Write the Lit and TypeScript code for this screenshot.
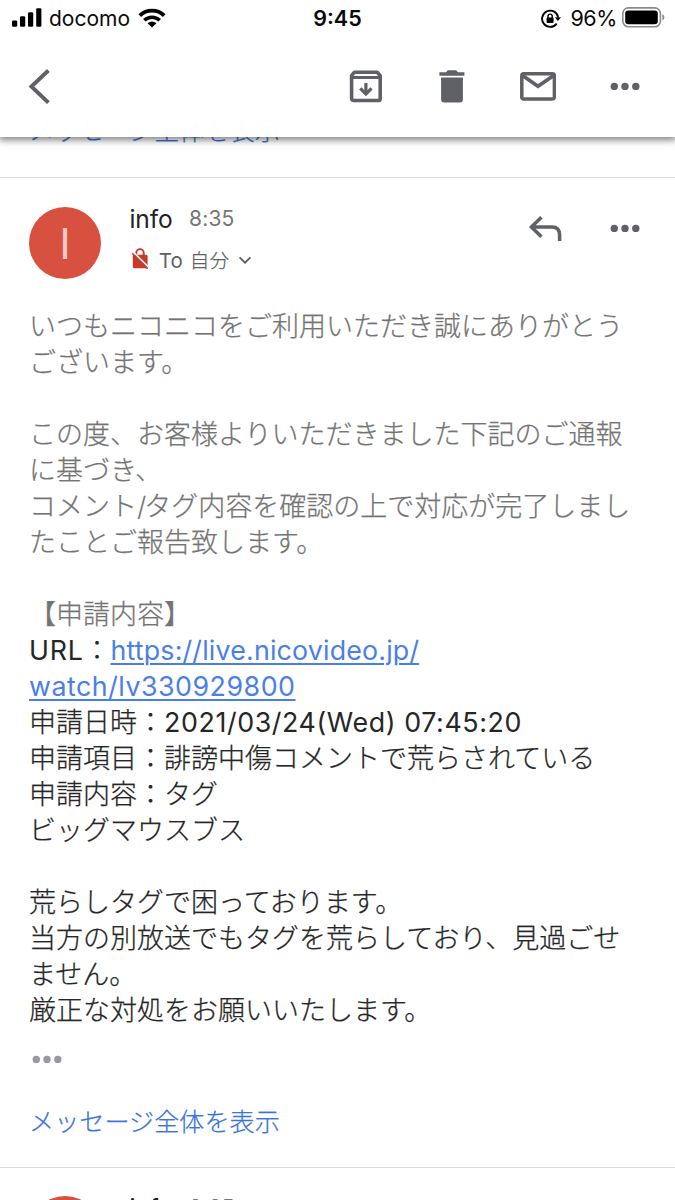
import { LitElement, html, css, nothing } from "lit";
import { customElement, property } from "lit/decorators.js";

const moreDots = html`<svg width="36" height="36" viewBox="0 0 36 36">
  <circle cx="7.3" cy="18.4" r="3.7" fill="currentColor" />
  <circle cx="18" cy="18.4" r="3.7" fill="currentColor" />
  <circle cx="28.8" cy="18.4" r="3.7" fill="currentColor" />
</svg>`;

type Part = { text: string; kind?: "latin" | "url1" | "url2" | "date" | "slash" };
type Line = { tone: "soft" | "dark"; parts: Part[] };

const soft = (text: string): Line => ({ tone: "soft", parts: [{ text }] });
const dark = (text: string): Line => ({ tone: "dark", parts: [{ text }] });

const LINES: Line[] = [
  soft("いつもニコニコをご利用いただき誠にありがとう"),
  soft("ございます。"),
  soft(""),
  soft("この度、お客様よりいただきました下記のご通報"),
  soft("に基づき、"),
  {
    tone: "soft",
    parts: [
      { text: "コメント" },
      { text: "/", kind: "slash" },
      { text: "タグ内容を確認の上で対応が完了しまし" },
    ],
  },
  soft("たことご報告致します。"),
  soft(""),
  soft("【申請内容】"),
  {
    tone: "dark",
    parts: [
      { text: "URL", kind: "latin" },
      { text: "：" },
      { text: "https://live.nicovideo.jp/", kind: "url1" },
    ],
  },
  { tone: "dark", parts: [{ text: "watch/lv330929800", kind: "url2" }] },
  {
    tone: "dark",
    parts: [{ text: "申請日時：" }, { text: "2021/03/24(Wed) 07:45:20", kind: "date" }],
  },
  dark("申請項目：誹謗中傷コメントで荒らされている"),
  dark("申請内容：タグ"),
  dark("ビッグマウスブス"),
  dark(""),
  dark("荒らしタグで困っております。"),
  dark("当方の別放送でもタグを荒らしており、見過ごせ"),
  dark("ません。"),
  dark("厳正な対処をお願いいたします。"),
];

@customElement("status-bar")
class StatusBar extends LitElement {
  static styles = css`
    :host {
      display: grid;
      grid-template-columns: 1fr auto 1fr;
      align-items: center;
      height: 37px;
      padding: 0 10px 0 12px;
      box-sizing: border-box;
      color: #0a0a0a;
      font: 400 21.5px/37px Inter, "Liberation Sans", sans-serif;
    }
    svg { display: block; flex: none; }
    .left, .right { display: flex; align-items: center; }
    .right { justify-content: flex-end; }
    .carrier { margin-left: 7px; width: 82px; font-size: 21px; letter-spacing: 0; white-space: nowrap; }
    .wifi { margin-left: 7px; }
    .time { font-weight: 600; margin-right: 2px; }
    .percent { margin: 0 5px 0 9px; letter-spacing: -0.4px; }
  `;

  render() {
    return html`
      <div class="left">
        <svg width="30" height="37" viewBox="0 0 30 37" fill="#000">
          <rect x="0" y="20.4" width="5.2" height="6.3" rx="1.2" />
          <rect x="8" y="16.2" width="5.2" height="10.5" rx="1.2" />
          <rect x="16" y="12.2" width="5.2" height="14.5" rx="1.2" />
          <rect x="24.2" y="8.3" width="5.2" height="18.4" rx="1.2" />
        </svg>
        <span class="carrier">docomo</span>
        <svg class="wifi" width="28" height="37" viewBox="0 0 28 37">
          <path d="M1.8 15.6A17.5 17.5 0 0 1 26.2 15.6" fill="none" stroke="#000" stroke-width="3.7" />
          <path d="M6.3 20.2A11.2 11.2 0 0 1 21.7 20.2" fill="none" stroke="#000" stroke-width="3.5" />
          <path d="M14 27.6L9.6 23.3A6.4 6.4 0 0 1 18.4 23.3Z" fill="#000" />
        </svg>
      </div>
      <div class="time">9:45</div>
      <div class="right">
        <svg width="20" height="37" viewBox="0 0 20 37">
          <path d="M15.7 23.6A8.1 8.1 0 1 1 17.1 17" fill="none" stroke="#000" stroke-width="1.9" />
          <path d="M13.8 17.2H20L16.9 21Z" fill="#000" />
          <rect x="5.6" y="17.6" width="7" height="5.4" rx="0.8" fill="#000" />
          <path d="M7 18V16.2A2.1 2.1 0 0 1 11.2 16.2V18" fill="none" stroke="#000" stroke-width="1.4" />
        </svg>
        <span class="percent">96%</span>
        <svg width="43" height="37" viewBox="0 0 43 37">
          <rect x="0.8" y="7.9" width="37.6" height="18.8" rx="5.6" fill="none" stroke="#8a8a8a" stroke-width="1.6" />
          <rect x="3.2" y="10.4" width="32.6" height="13.8" rx="3.2" fill="#000" />
          <path d="M40.4 14.3Q42.4 15 42.4 17.3T40.4 20.3Z" fill="#8a8a8a" />
        </svg>
      </div>
    `;
  }
}

@customElement("mail-toolbar")
class MailToolbar extends LitElement {
  static styles = css`
    :host {
      display: flex;
      align-items: center;
      height: 100px;
      padding: 0 32.4px 2px 22px;
      box-sizing: border-box;
      color: #5f6166;
    }
    svg { display: block; }
    .actions { display: flex; gap: 50.3px; margin-left: auto; }
  `;

  render() {
    return html`
      <svg width="36" height="36" viewBox="0 0 36 36">
        <path d="M26.4 2.5L9.4 18.5L26.4 34.6" fill="none" stroke="currentColor" stroke-width="3.9" />
      </svg>
      <div class="actions">
        <svg width="36" height="36" viewBox="0 0 36 36" fill="none" stroke="currentColor">
          <path d="M3.6 7.6L6.4 4.2H29.2L32.2 7.6V30.4Q32.2 32.5 30.1 32.5H5.7Q3.6 32.5 3.6 30.4Z" stroke-width="3.6" stroke-linejoin="round" />
          <path d="M3.6 9.5H32.2" stroke-width="3" />
          <path d="M17.9 15V25" stroke-width="3.2" />
          <path d="M12.3 20.4L17.9 26L23.5 20.4" stroke-width="3.3" />
        </svg>
        <svg width="36" height="36" viewBox="0 0 36 36" fill="currentColor">
          <path d="M5.4 4.2H12L13.8 2.2H22.2L24 4.2H30.4V7.8H5.4Z" />
          <path d="M7.1 9.6H28.9V31.2Q28.9 34.4 25.7 34.4H10.3Q7.1 34.4 7.1 31.2Z" />
        </svg>
        <svg width="36" height="36" viewBox="0 0 36 36" fill="none" stroke="currentColor">
          <rect x="1.8" y="5.7" width="32.6" height="25.3" rx="2" stroke-width="3.5" />
          <path d="M2.5 7.4L18 18.2L33.7 7.4" stroke-width="3.7" />
        </svg>
        ${moreDots}
      </div>
    `;
  }
}

@customElement("message-card")
class MessageCard extends LitElement {
  @property({ type: Boolean }) preview = false;

  static styles = css`
    :host {
      display: block;
      border-top: 1px solid #dcdcdc;
      font-family: Inter, "Noto Sans CJK JP", sans-serif;
      color: #202124;
    }
    svg { display: block; flex: none; }
    .head { display: flex; padding: 29px 32.4px 0 29px; height: 130px; box-sizing: border-box; }
    .head.peek { padding-top: 28px; }
    .avatar {
      flex: none;
      display: grid;
      place-items: center;
      width: 72px;
      height: 72px;
      border-radius: 50%;
      background: #d75040;
    }
    .initial { color: #fbc9c4; font: 400 43px/72px Inter, sans-serif; }
    .who { margin-left: 28.5px; flex: 1; }
    .sender { display: flex; height: 24px; line-height: 24px; white-space: nowrap; }
    .name { width: 59.5px; font-size: 24.5px; letter-spacing: -0.1px; }
    .time { font-size: 21px; color: #75777b; letter-spacing: 0.2px; }
    .recipient { display: flex; align-items: center; height: 30px; margin-top: 14px; color: #5f6166; white-space: nowrap; }
    .to { margin-left: 9.3px; width: 31px; font-size: 20.5px; }
    .me { font-family: "Noto Sans CJK JP", sans-serif; font-size: 19.6px; font-weight: 300; line-height: 30px; -webkit-text-stroke: 0.25px currentColor; }
    .chevron { margin-left: 9px; }
    .actions { display: flex; gap: 43.6px; height: 42px; align-items: center; color: #5f6166; }
    .body {
      font-family: "Noto Sans CJK JP", sans-serif;
      font-weight: 300;
      font-size: 27px;
      padding-left: 29px;
      margin-top: -1px;
      -webkit-text-stroke: 0.25px currentColor;
    }
    .line { height: 36px; line-height: 36px; white-space: nowrap; }
    .soft { color: #747474; }
    .dark { color: #262626; }
    .latin, .url1, .url2, .date, .slash {
      font-family: Inter, sans-serif;
      font-weight: 400;
      font-size: 26.8px;
      -webkit-text-stroke: 0;
    }
    .slash { font-weight: 300; letter-spacing: -2px; }
    .latin { letter-spacing: 0.73px; }
    .date { letter-spacing: 0.6px; }
    .url1 { letter-spacing: 0.17px; }
    .url2 { letter-spacing: 0.5px; }
    .url1, .url2 {
      color: #4b7fe8;
      text-decoration: underline;
      text-decoration-thickness: 2px;
      text-underline-offset: 3px;
    }
    .quoted { display: flex; height: 36px; padding: 14px 0 0 28.7px; color: #97999e; }
    .full {
      padding: 23px 0 0 29px;
      height: 66px;
      color: #3b73dc;
      font: 300 25.15px/40px "Noto Sans CJK JP", sans-serif;
      -webkit-text-stroke: 0.25px currentColor;
    }
  `;

  private renderPart(part: Part) {
    return part.kind ? html`<span class=${part.kind}>${part.text}</span>` : part.text;
  }

  render() {
    return html`
      <div class="head ${this.preview ? "peek" : ""}">
        <div class="avatar"><span class="initial">I</span></div>
        <div class="who">
          <div class="sender"><span class="name">info</span><span class="time">8:35</span></div>
          <div class="recipient">
            <svg width="20" height="24" viewBox="0 0 20 24">
              <path d="M6.3 9V4.8A3.7 3.7 0 0 1 13.7 4.8V9" fill="none" stroke="#c9392c" stroke-width="1.9" />
              <rect x="2.8" y="6.7" width="14.8" height="13.6" rx="1.6" fill="#c9392c" />
              <path d="M3.4 4.4L19.2 19.9" stroke="#fff" stroke-width="1.8" />
              <path d="M2.2 5.3L17.7 20.6" stroke="#c9392c" stroke-width="1.6" />
            </svg>
            <span class="to">To</span><span class="me">自分</span>
            <svg class="chevron" width="14" height="12" viewBox="0 0 14 12">
              <path d="M1.6 3.4L7 8.6L12.4 3.4" fill="none" stroke="currentColor" stroke-width="1.9" />
            </svg>
          </div>
        </div>
        <div class="actions">
          <svg width="36" height="36" viewBox="0 0 36 36">
            <path d="M14.4 7.2L4.4 17L14.4 26.8M4.4 17H25Q32.6 17 32.6 25V31" fill="none" stroke="currentColor" stroke-width="3.5" />
          </svg>
          ${moreDots}
        </div>
      </div>
      ${this.preview
        ? nothing
        : html`
            <div class="body">
              ${LINES.map(
                (line) => html`<div class="line ${line.tone}">${line.parts.map((p) => this.renderPart(p))}</div>`
              )}
            </div>
            <div class="quoted">${moreDots}</div>
            <div class="full">メッセージ全体を表示</div>
          `}
    `;
  }
}

@customElement("app-root")
class AppRoot extends LitElement {
  static styles = css`
    :host {
      display: block;
      position: relative;
      width: 675px;
      height: 1200px;
      overflow: hidden;
      background: #fff;
    }
    .bar {
      position: absolute;
      inset: 0 0 auto 0;
      z-index: 1;
      background: rgba(255, 255, 255, 0.985);
      box-shadow: 0 2px 7px 1px rgba(0, 0, 0, 0.5);
    }
    .previous {
      height: 177px;
      padding: 109px 0 0 29px;
      box-sizing: border-box;
      color: #3b73dc;
      font: 300 25.15px/40px "Noto Sans CJK JP", sans-serif;
      -webkit-text-stroke: 0.25px currentColor;
    }
    .first { height: 989px; }
  `;

  render() {
    return html`
      <div class="bar">
        <status-bar></status-bar>
        <mail-toolbar></mail-toolbar>
      </div>
      <div class="previous">メッセージ全体を表示</div>
      <message-card class="first"></message-card>
      <message-card preview></message-card>
    `;
  }
}
